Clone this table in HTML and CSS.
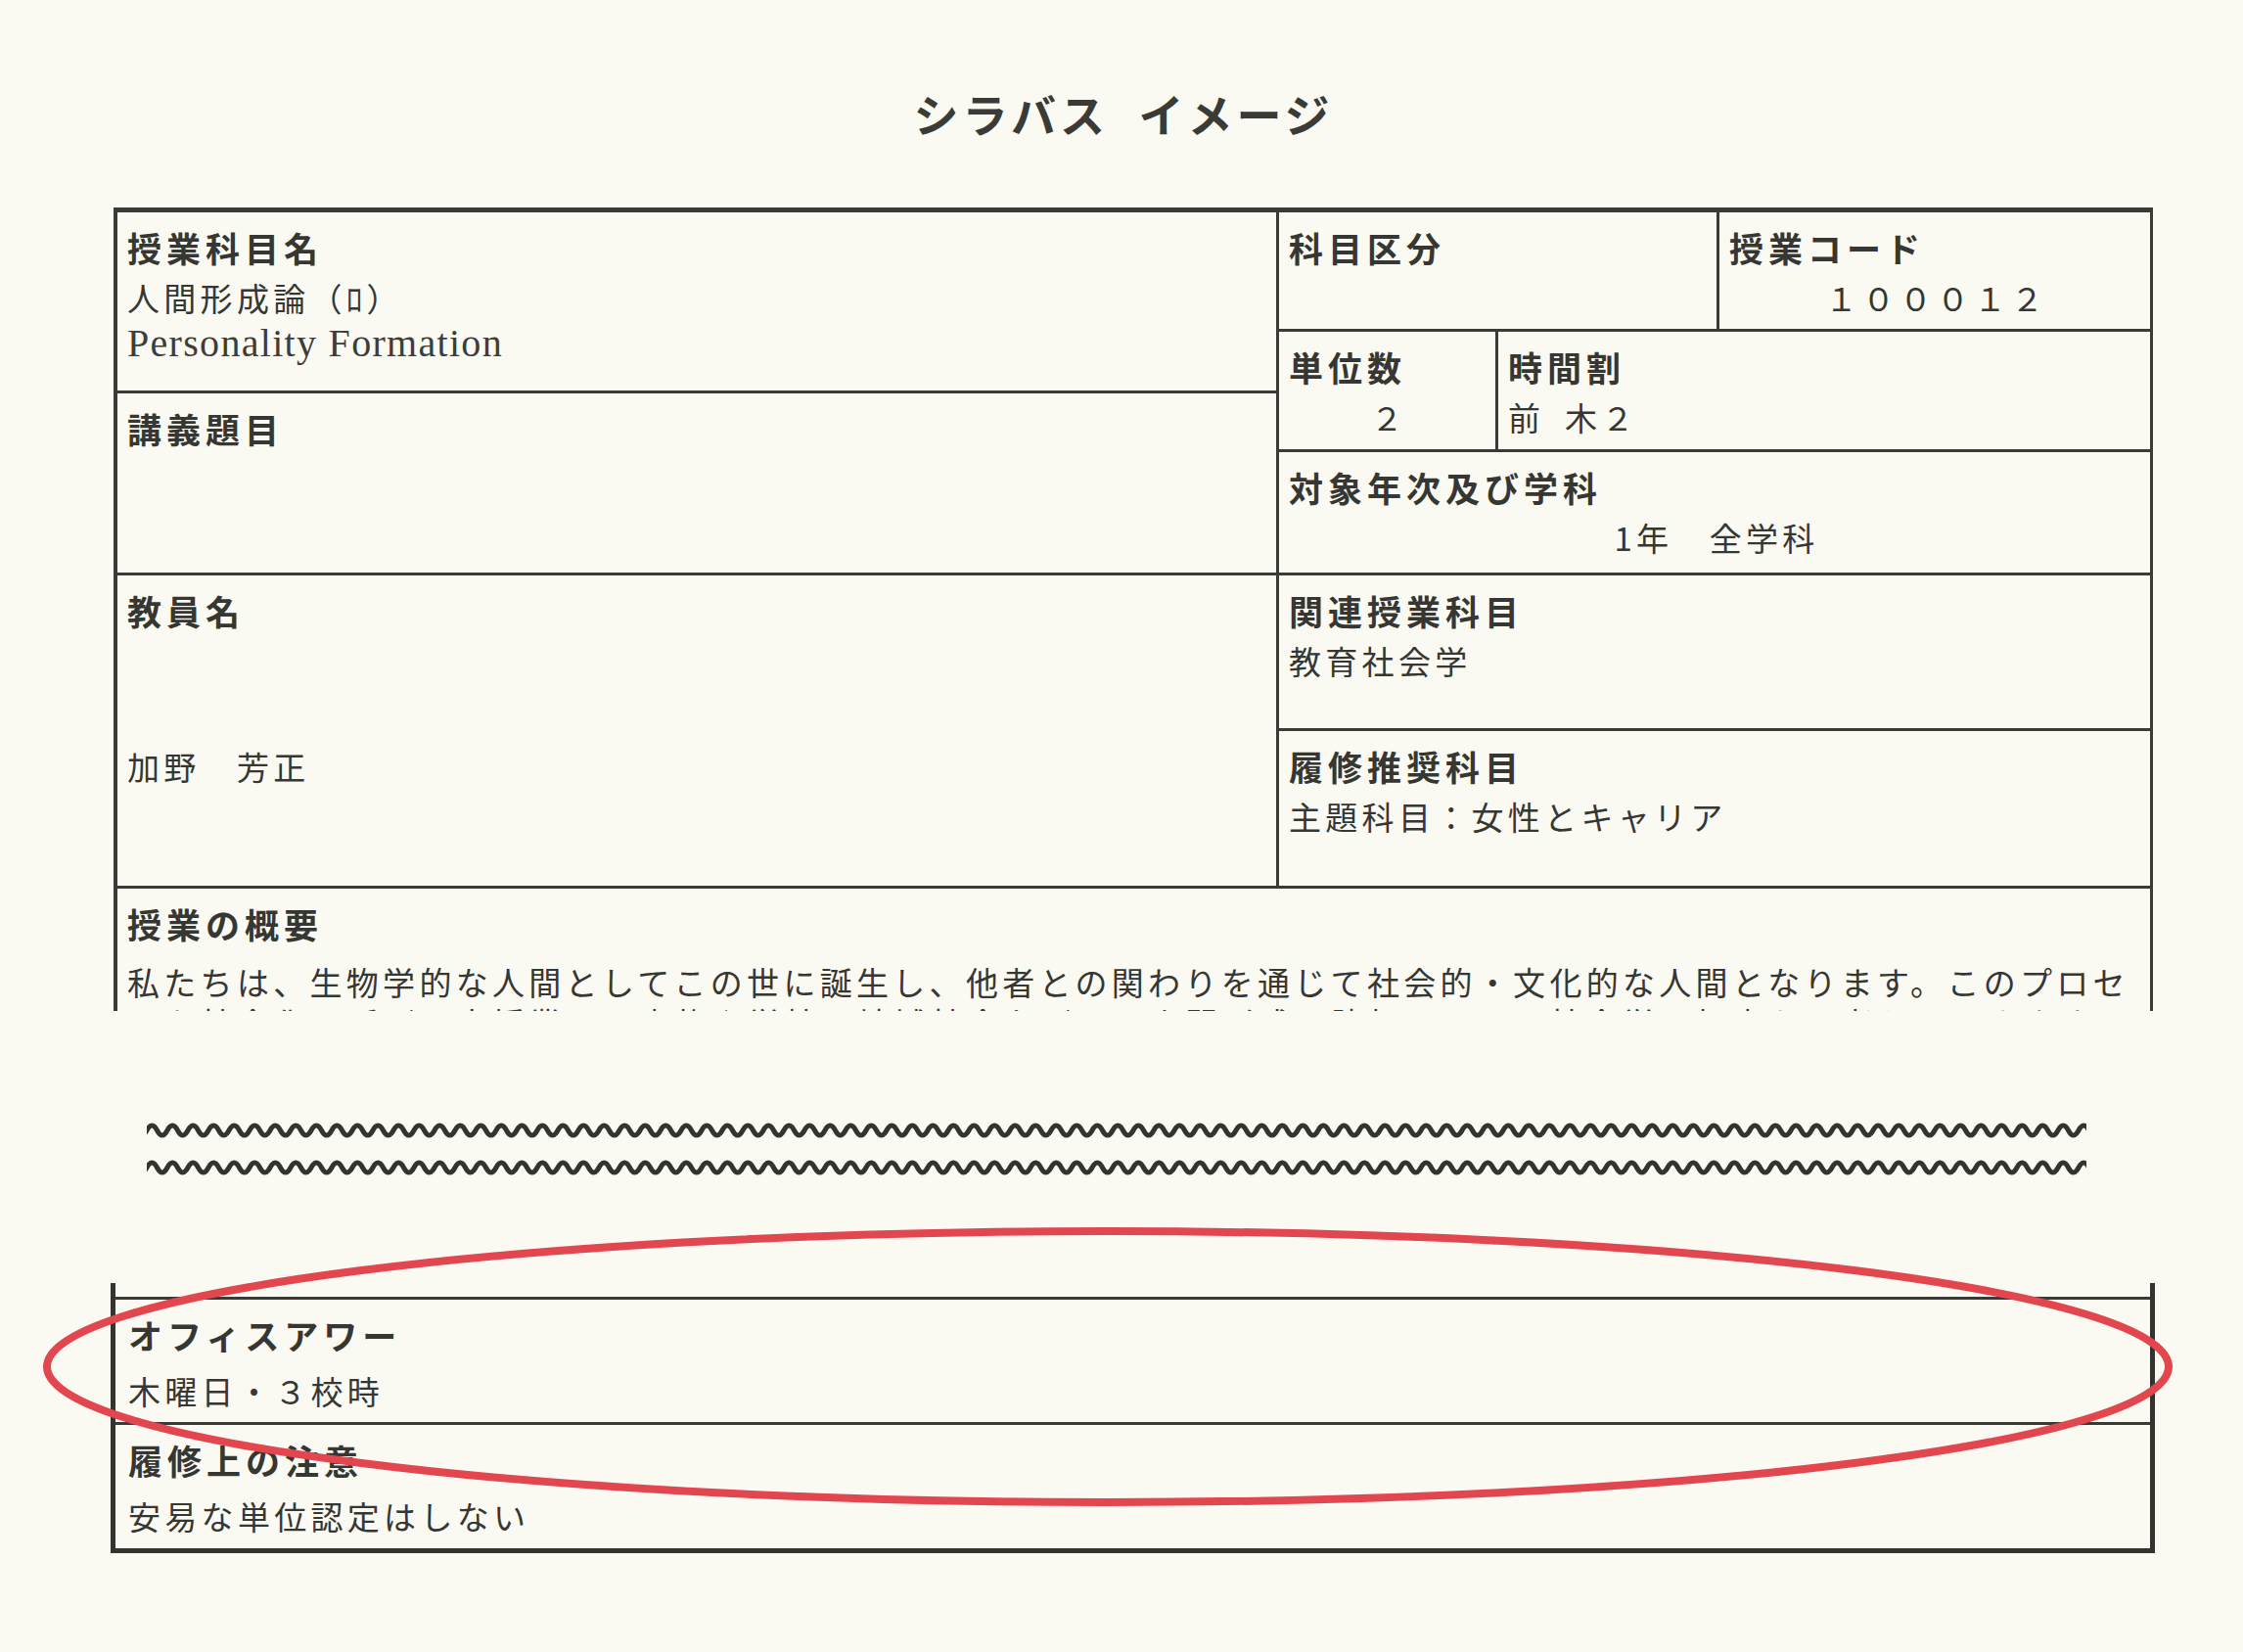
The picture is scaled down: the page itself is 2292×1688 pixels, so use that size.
FILE: index.html
```html
<!DOCTYPE html>
<html lang="ja">
<head>
<meta charset="utf-8">
<title>シラバス イメージ</title>
<link rel="stylesheet" href="styles.css">
</head>
<body>
<div class="page">
  <h1 class="title">シラバス イメージ</h1>

  <div class="sheet">
    <div class="cell c-name">
      <div class="lbl">授業科目名</div>
      <div class="val">人間形成論（ﾛ）</div>
      <div class="en">Personality Formation</div>
    </div>
    <div class="cell c-kubun">
      <div class="lbl">科目区分</div>
    </div>
    <div class="cell c-code">
      <div class="lbl">授業コード</div>
      <div class="val center code">１０００１２</div>
    </div>
    <div class="cell c-tani">
      <div class="lbl">単位数</div>
      <div class="val center">２</div>
    </div>
    <div class="cell c-jikan">
      <div class="lbl">時間割</div>
      <div class="val">前&ensp;木２</div>
    </div>
    <div class="cell c-dai">
      <div class="lbl">講義題目</div>
    </div>
    <div class="cell c-taisho">
      <div class="lbl">対象年次及び学科</div>
      <div class="val center">1年　全学科</div>
    </div>
    <div class="cell c-kyoin">
      <div class="lbl">教員名</div>
      <div class="val teacher">加野　芳正</div>
    </div>
    <div class="cell c-kanren">
      <div class="lbl">関連授業科目</div>
      <div class="val">教育社会学</div>
    </div>
    <div class="cell c-suisho">
      <div class="lbl">履修推奨科目</div>
      <div class="val">主題科目：女性とキャリア</div>
    </div>
    <div class="cell c-gaiyo">
      <div class="lbl">授業の概要</div>
      <p class="para">私たちは、生物学的な人間としてこの世に誕生し、他者との関わりを通じて社会的・文化的な人間となります。このプロセ<br>スを社会化と呼び、本授業では家族や学校、地域社会などでの人間形成の諸相について社会学の視点から考えていきます。</p>
    </div>
  </div>

  <div class="waves">
    <svg class="wave" viewBox="0 0 1982 16" aria-hidden="true">
      <defs>
        <pattern id="wv" width="42" height="16" patternUnits="userSpaceOnUse">
          <path d="M-10.5,8 Q-5.25,18 0,8 T10.5,8 T21,8 T31.5,8 T42,8 T52.5,8" fill="none" stroke="#33332f" stroke-width="5"/>
        </pattern>
      </defs>
      <rect x="0" y="0" width="1982" height="16" fill="url(#wv)"/>
    </svg>
    <svg class="wave" viewBox="0 0 1982 16" aria-hidden="true">
      <rect x="0" y="0" width="1982" height="16" fill="url(#wv)"/>
    </svg>
  </div>

  <div class="notes">
    <div class="note">
      <div class="lbl">オフィスアワー</div>
      <div class="val nval">木曜日・３校時</div>
    </div>
    <div class="note">
      <div class="lbl">履修上の注意</div>
      <div class="val nval">安易な単位認定はしない</div>
    </div>
  </div>

  <svg class="mark" viewBox="0 0 2184 293" aria-hidden="true">
    <ellipse cx="1092" cy="146.5" rx="1084" ry="138.5" fill="none" stroke="#e2464f" stroke-width="8"/>
  </svg>
</div>
</body>
</html>
```
FILE: styles.css
```css
* {
  box-sizing: border-box;
  margin: 0;
  padding: 0;
}

html,
body {
  background: #fafaf2;
}

body {
  width: 2292px;
  height: 1688px;
  overflow: hidden;
  font-family: "Noto Sans CJK JP", "Noto Sans", sans-serif;
  color: #363633;
}

.page {
  position: relative;
  width: 2292px;
  height: 1688px;
  padding-top: 85px;
}

.title {
  margin: 0 0 67px;
  height: 60px;
  line-height: 60px;
  text-align: center;
  font-size: 46px;
  font-weight: 700;
  letter-spacing: 4px;
  word-spacing: 16px;
  padding-left: 4px;
  color: #3a3a37;
}

/* upper table */
.sheet {
  margin-left: 116px;
  width: 2084px;
  height: 821px;
  border-top: 5px solid #3a3a37;
  border-left: 4px solid #3a3a37;
  border-right: 3px solid #3a3a37;
  background: #3a3a37;
  display: grid;
  grid-template-columns: 1184px 221px 223px 440px;
  grid-template-rows: 119px 60px 57px 123px 156px 158px 1fr;
  gap: 3px;
  overflow: hidden;
}

.cell {
  background: #fafaf2;
  padding: 11px 10px 0;
  overflow: hidden;
}

.c-name   { grid-column: 1; grid-row: 1 / 3; }
.c-kubun  { grid-column: 2 / 4; grid-row: 1; }
.c-code   { grid-column: 4; grid-row: 1; }
.c-tani   { grid-column: 2; grid-row: 2 / 4; }
.c-jikan  { grid-column: 3 / 5; grid-row: 2 / 4; }
.c-dai    { grid-column: 1; grid-row: 3 / 5; }
.c-taisho { grid-column: 2 / 5; grid-row: 4; }
.c-kyoin  { grid-column: 1; grid-row: 5 / 7; }
.c-kanren { grid-column: 2 / 5; grid-row: 5; }
.c-suisho { grid-column: 2 / 5; grid-row: 6; }
.c-gaiyo  { grid-column: 1 / 5; grid-row: 7; }

.lbl {
  font-size: 35px;
  font-weight: 700;
  letter-spacing: 5px;
  line-height: 50px;
  white-space: nowrap;
}

.val {
  font-size: 33px;
  letter-spacing: 4.3px;
  line-height: 52px;
  white-space: nowrap;
}

.center {
  text-align: center;
  padding-left: 4px;
}

.code {
  letter-spacing: 5px;
}

.en {
  font-family: "Liberation Serif", "DejaVu Serif", serif;
  font-size: 40px;
  letter-spacing: 1.3px;
  line-height: 42px;
  color: #3d3d3a;
  white-space: nowrap;
}

.teacher {
  margin-top: 108px;
}

.para {
  margin-top: 13px;
  font-size: 33px;
  letter-spacing: 4.3px;
  line-height: 42px;
  white-space: nowrap;
}

/* wavy break */
.waves {
  margin: 114px 0 0 150px;
  width: 1982px;
  display: flex;
  flex-direction: column;
  gap: 22px;
}

.wave {
  display: block;
  width: 1982px;
  height: 16px;
}

/* lower table */
.notes {
  margin: 110px 0 0 113px;
  width: 2089px;
  padding-top: 14px;
  border-left: 5px solid #33332f;
  border-right: 5px solid #33332f;
  border-bottom: 5px solid #33332f;
}

.note {
  border-top: 3px solid #3a3a37;
  height: 128px;
  padding: 11px 13px 0;
}

.note + .note {
  height: 129px;
}

.nval {
  margin-top: 7px;
  line-height: 50px;
}

/* red annotation */
.mark {
  position: absolute;
  left: 40px;
  top: 1250px;
  width: 2184px;
  height: 293px;
}
```
